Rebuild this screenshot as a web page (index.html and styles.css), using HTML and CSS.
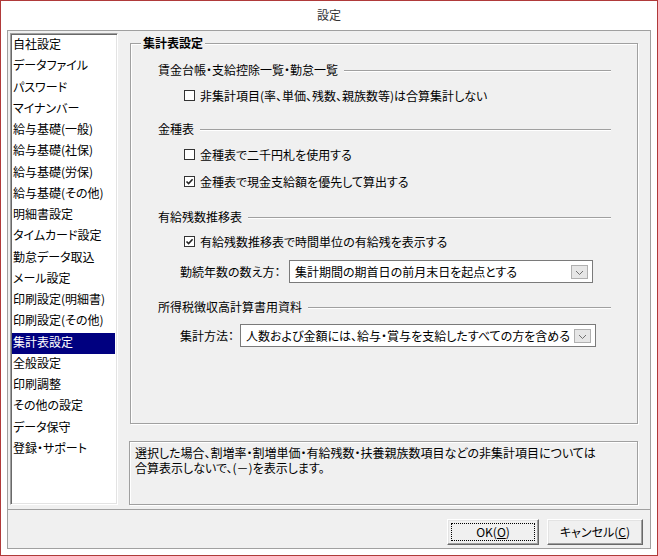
FILE: index.html
```html
<!DOCTYPE html>
<html lang="ja">
<head>
<meta charset="utf-8">
<title>設定</title>
<link rel="stylesheet" href="styles.css">
</head>
<body>
<div class="dialog">
  <div class="titlebar">設定</div>
  <div class="frame">
    <div class="main">
      <ul class="listbox">
        <li>自社設定</li>
        <li>データファイル</li>
        <li>パスワード</li>
        <li>マイナンバー</li>
        <li>給与基礎(一般)</li>
        <li>給与基礎(社保)</li>
        <li>給与基礎(労保)</li>
        <li>給与基礎(その他)</li>
        <li>明細書設定</li>
        <li>タイムカード設定</li>
        <li>勤怠データ取込</li>
        <li>メール設定</li>
        <li>印刷設定(明細書)</li>
        <li>印刷設定(その他)</li>
        <li class="selected">集計表設定</li>
        <li>全般設定</li>
        <li>印刷調整</li>
        <li>その他の設定</li>
        <li>データ保守</li>
        <li>登録・サポート</li>
      </ul>
      <div class="content">
        <div class="group">
          <div class="group-title">集計表設定</div>

          <div class="sec mt9"><span>賃金台帳・支給控除一覧・勤怠一覧</span><i class="rule"></i></div>
          <div class="check mt6"><span class="box"></span><span>非集計項目(率、単価、残数、親族数等)は合算集計しない</span></div>

          <div class="sec mt13"><span>金種表</span><i class="rule"></i></div>
          <div class="check mt6"><span class="box"></span><span>金種表で二千円札を使用する</span></div>
          <div class="check mt7"><span class="box checked"><svg viewBox="0 0 9 9" width="9" height="9"><path d="M1.5 4.5 L3.6 6.6 L7.6 2.2" fill="none" stroke="#222" stroke-width="1.6"/></svg></span><span>金種表で現金支給額を優先して算出する</span></div>

          <div class="sec mt15"><span>有給残数推移表</span><i class="rule"></i></div>
          <div class="check mt5"><span class="box checked"><svg viewBox="0 0 9 9" width="9" height="9"><path d="M1.5 4.5 L3.6 6.6 L7.6 2.2" fill="none" stroke="#222" stroke-width="1.6"/></svg></span><span>有給残数推移表で時間単位の有給残を表示する</span></div>
          <div class="field mt8">
            <span class="flabel w109">勤続年数の数え方：</span>
            <div class="combo w304"><span>集計期間の期首日の前月末日を起点とする</span><span class="drop"><svg viewBox="0 0 15 12" width="15" height="12"><path d="M4 5 L7.5 8.5 L11 5" fill="none" stroke="#707070" stroke-width="1"/></svg></span></div>
          </div>

          <div class="sec mt14"><span>所得税徴収高計算書用資料</span><i class="rule"></i></div>
          <div class="field mt7">
            <span class="flabel w60">集計方法：</span>
            <div class="combo w356"><span>人数および金額には、給与・賞与を支給したすべての方を含める</span><span class="drop"><svg viewBox="0 0 15 12" width="15" height="12"><path d="M4 5 L7.5 8.5 L11 5" fill="none" stroke="#707070" stroke-width="1"/></svg></span></div>
          </div>
        </div>
        <div class="desc">
          <div class="line">選択した場合、割増率・割増単価・有給残数・扶養親族数項目などの非集計項目については</div>
          <div class="line">合算表示しないで、(－)を表示します。</div>
        </div>
      </div>
    </div>
    <div class="footer">
      <button class="btn ok"><span class="focus">OK(<u>O</u>)</span></button>
      <button class="btn cancel"><span class="nofocus">キャンセル(<u>C</u>)</span></button>
    </div>
  </div>
</div>
</body>
</html>
```

FILE: styles.css
```css
* { box-sizing: border-box; }
html, body { margin: 0; padding: 0; }
body {
  width: 658px;
  height: 556px;
  background: #fff;
  font-family: "Noto Sans CJK JP", "Noto Sans", sans-serif;
  font-size: 12px;
  color: #000;
  font-feature-settings: "palt";
  overflow: hidden;
}
.dialog {
  width: 658px;
  height: 556px;
  border: 1px solid #b03a3a;
  background: #fff;
  display: flex;
  flex-direction: column;
}
.titlebar {
  height: 29px;
  line-height: 28px;
  text-align: center;
  color: #333;
}
.frame {
  margin: 0 6px 6px;
  flex: 1;
  border: 1px solid #a0a0a0;
  background: #f0f0f0;
  display: flex;
  flex-direction: column;
}
.main {
  display: flex;
  gap: 12px;
  padding: 2px 12px 4px 2px;
  border-bottom: 1px solid #a0a0a0;
}
.listbox {
  list-style: none;
  margin: 0;
  width: 108px;
  height: 472px;
  padding: 1px 2px 0 1px;
  background: #fff;
  border-style: solid;
  border-width: 1px;
  border-color: #a0a0a0 #fff #fff #a0a0a0;
  box-shadow: inset 1px 1px 0 #696969, inset -1px -1px 0 #e3e3e3;
}
.listbox li {
  height: 21.25px;
  line-height: 18px;
  padding: 0 0 3.25px 1px;
  white-space: nowrap;
}
.listbox li.selected {
  background: #000080;
  color: #fff;
}
.content {
  width: 508px;
  display: flex;
  flex-direction: column;
}
.group {
  margin-top: 10px;
  height: 381px;
  border: 1px solid #a0a0a0;
  box-shadow: inset 1px 1px 0 #fff, 1px 1px 0 #fff;
}
.group-title {
  display: table;
  margin: -9px 0 0 10px;
  padding: 0 2px;
  line-height: 16px;
  background: #f0f0f0;
  font-weight: bold;
  position: relative;
}
.sec {
  display: flex;
  align-items: center;
  height: 20px;
  padding-bottom: 1px;
  margin-left: 27px;
  margin-right: 26px;
  white-space: nowrap;
}
.rule {
  flex: 1;
  height: 2px;
  margin-left: 6px;
  margin-top: 3px;
  border-top: 1px solid #a0a0a0;
  border-bottom: 1px solid #fff;
}
.check {
  display: flex;
  align-items: center;
  height: 20px;
  padding-bottom: 1px;
  margin-left: 53px;
  white-space: nowrap;
}
.box {
  width: 11px;
  height: 11px;
  border: 1px solid #333;
  background: #fff;
  margin-right: 5px;
  display: flex;
  align-items: center;
  justify-content: center;
  flex: none;
}
.field {
  display: flex;
  align-items: center;
  height: 23px;
  margin-left: 49px;
  white-space: nowrap;
}
.flabel { flex: none; }
.w109 { width: 109px; }
.w60 { width: 60px; }
.combo {
  height: 23px;
  border: 1px solid #7a7a7a;
  background: #fff;
  display: flex;
  align-items: center;
  padding-left: 5px;
  flex: none;
}
.w304 { width: 304px; }
.w356 { width: 356px; }
.drop {
  margin-left: auto;
  margin-right: 4px;
  width: 17px;
  height: 14px;
  border: 1px solid #b0b0b0;
  background: #e6e6e6;
  display: flex;
  align-items: center;
  justify-content: center;
  flex: none;
}
.mt5 { margin-top: 5px; }
.mt6 { margin-top: 6px; }
.mt7 { margin-top: 7px; }
.mt8 { margin-top: 8px; }
.mt9 { margin-top: 9px; }
.mt13 { margin-top: 13px; }
.mt14 { margin-top: 14px; }
.mt15 { margin-top: 15px; }
.desc {
  margin-top: 17px;
  margin-left: -1px;
  height: 64px;
  border: 1px solid #a0a0a0;
  box-shadow: inset 1px 1px 0 #fff, 1px 1px 0 #fff;
  padding: 3px 5px;
  white-space: nowrap;
}
.desc .line {
  height: 15px;
  line-height: 15px;
}
.footer {
  flex: 1;
  display: flex;
  justify-content: flex-end;
  align-items: flex-start;
  gap: 8px;
  padding: 9px 7px 0 0;
}
.btn {
  height: 26px;
  padding: 3px;
  font: inherit;
  color: #000;
  background: #f0f0f0;
  border-style: solid;
  border-width: 1px;
  border-color: #fff #696969 #696969 #fff;
  box-shadow: inset -1px -1px 0 #a0a0a0, inset 1px 1px 0 #e3e3e3;
  display: flex;
}
.ok { width: 92px; }
.cancel { width: 96px; }
.focus, .nofocus {
  flex: 1;
  display: flex;
  align-items: center;
  justify-content: center;
  border: 1px dotted #000;
  line-height: 16px;
}
.nofocus { border-color: transparent; }
```
